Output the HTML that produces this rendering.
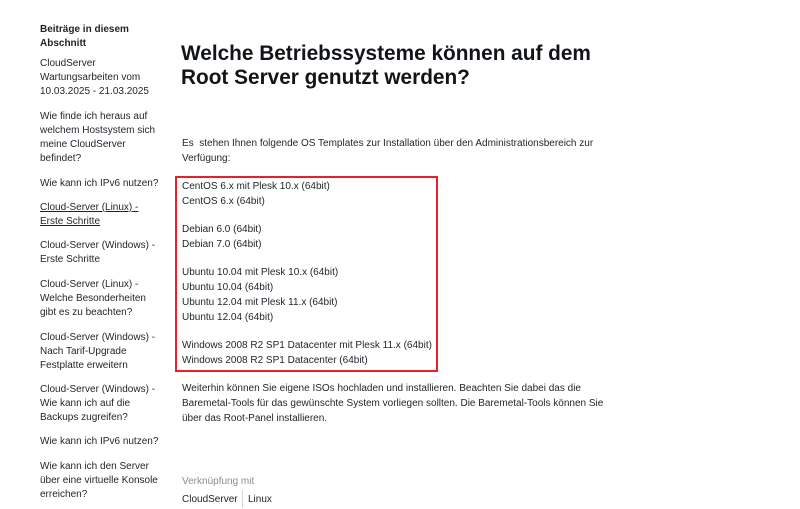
<!DOCTYPE html>
<html><head><meta charset="utf-8"><style>
body{margin:0;width:800px;height:509px;background:#fff;position:relative;overflow:hidden;font-family:"Liberation Sans",sans-serif;color:#1f2329;}
.t{position:absolute;font-size:10px;line-height:14px;white-space:nowrap;}
.s{left:40px}
.m{left:182px}
.b{font-weight:bold}
h1{position:absolute;left:181px;top:42px;margin:0;font-size:20.8px;line-height:24px;font-weight:bold;color:#111418;}
.box{position:absolute;left:175px;top:176px;width:259px;height:192px;border:2px solid #e8202a;}
.u{text-decoration:underline}
</style></head><body>
<div class="t s b" style="top:23px">Beiträge in diesem</div>
<div class="t s b" style="top:37px">Abschnitt</div>
<div class="t s" style="top:57px">CloudServer</div>
<div class="t s" style="top:71px">Wartungsarbeiten vom</div>
<div class="t s" style="top:85px">10.03.2025 - 21.03.2025</div>
<div class="t s" style="top:110px">Wie finde ich heraus auf</div>
<div class="t s" style="top:124px">welchem Hostsystem sich</div>
<div class="t s" style="top:138px">meine CloudServer</div>
<div class="t s" style="top:152px">befindet?</div>
<div class="t s" style="top:177px">Wie kann ich IPv6 nutzen?</div>
<div class="t s u" style="top:201px">Cloud-Server (Linux) -</div>
<div class="t s u" style="top:215px">Erste Schritte</div>
<div class="t s" style="top:239px">Cloud-Server (Windows) -</div>
<div class="t s" style="top:253px">Erste Schritte</div>
<div class="t s" style="top:278px">Cloud-Server (Linux) -</div>
<div class="t s" style="top:292px">Welche Besonderheiten</div>
<div class="t s" style="top:306px">gibt es zu beachten?</div>
<div class="t s" style="top:331px">Cloud-Server (Windows) -</div>
<div class="t s" style="top:345px">Nach Tarif-Upgrade</div>
<div class="t s" style="top:359px">Festplatte erweitern</div>
<div class="t s" style="top:383px">Cloud-Server (Windows) -</div>
<div class="t s" style="top:397px">Wie kann ich auf die</div>
<div class="t s" style="top:411px">Backups zugreifen?</div>
<div class="t s" style="top:435px">Wie kann ich IPv6 nutzen?</div>
<div class="t s" style="top:460px">Wie kann ich den Server</div>
<div class="t s" style="top:474px">über eine virtuelle Konsole</div>
<div class="t s" style="top:488px">erreichen?</div>

<h1>Welche Betriebssysteme können auf dem<br>Root Server genutzt werden?</h1>

<div class="t m" style="top:137px">Es&nbsp; stehen Ihnen folgende OS Templates zur Installation über den Administrationsbereich zur</div>
<div class="t m" style="top:152px">Verfügung:</div>
<div class="box"></div>
<div class="t m" style="top:180px">CentOS 6.x mit Plesk 10.x (64bit)</div>
<div class="t m" style="top:195px">CentOS 6.x (64bit)</div>
<div class="t m" style="top:223px">Debian 6.0 (64bit)</div>
<div class="t m" style="top:238px">Debian 7.0 (64bit)</div>
<div class="t m" style="top:266px">Ubuntu 10.04 mit Plesk 10.x (64bit)</div>
<div class="t m" style="top:281px">Ubuntu 10.04 (64bit)</div>
<div class="t m" style="top:296px">Ubuntu 12.04 mit Plesk 11.x (64bit)</div>
<div class="t m" style="top:311px">Ubuntu 12.04 (64bit)</div>
<div class="t m" style="top:339px">Windows 2008 R2 SP1 Datacenter mit Plesk 11.x (64bit)</div>
<div class="t m" style="top:354px">Windows 2008 R2 SP1 Datacenter (64bit)</div>
<div class="t m" style="top:382px">Weiterhin können Sie eigene ISOs hochladen und installieren. Beachten Sie dabei das die</div>
<div class="t m" style="top:397px">Baremetal-Tools für das gewünschte System vorliegen sollten. Die Baremetal-Tools können Sie</div>
<div class="t m" style="top:412px">über das Root-Panel installieren.</div>
<div class="t m" style="top:475px;color:#8a8d92">Verknüpfung mit</div>
<div class="t m" style="top:493px">CloudServer</div>
<div style="position:absolute;left:242px;top:490px;width:1px;height:18px;background:#d5d7da"></div>
<div class="t" style="left:248px;top:493px">Linux</div>
</body></html>
